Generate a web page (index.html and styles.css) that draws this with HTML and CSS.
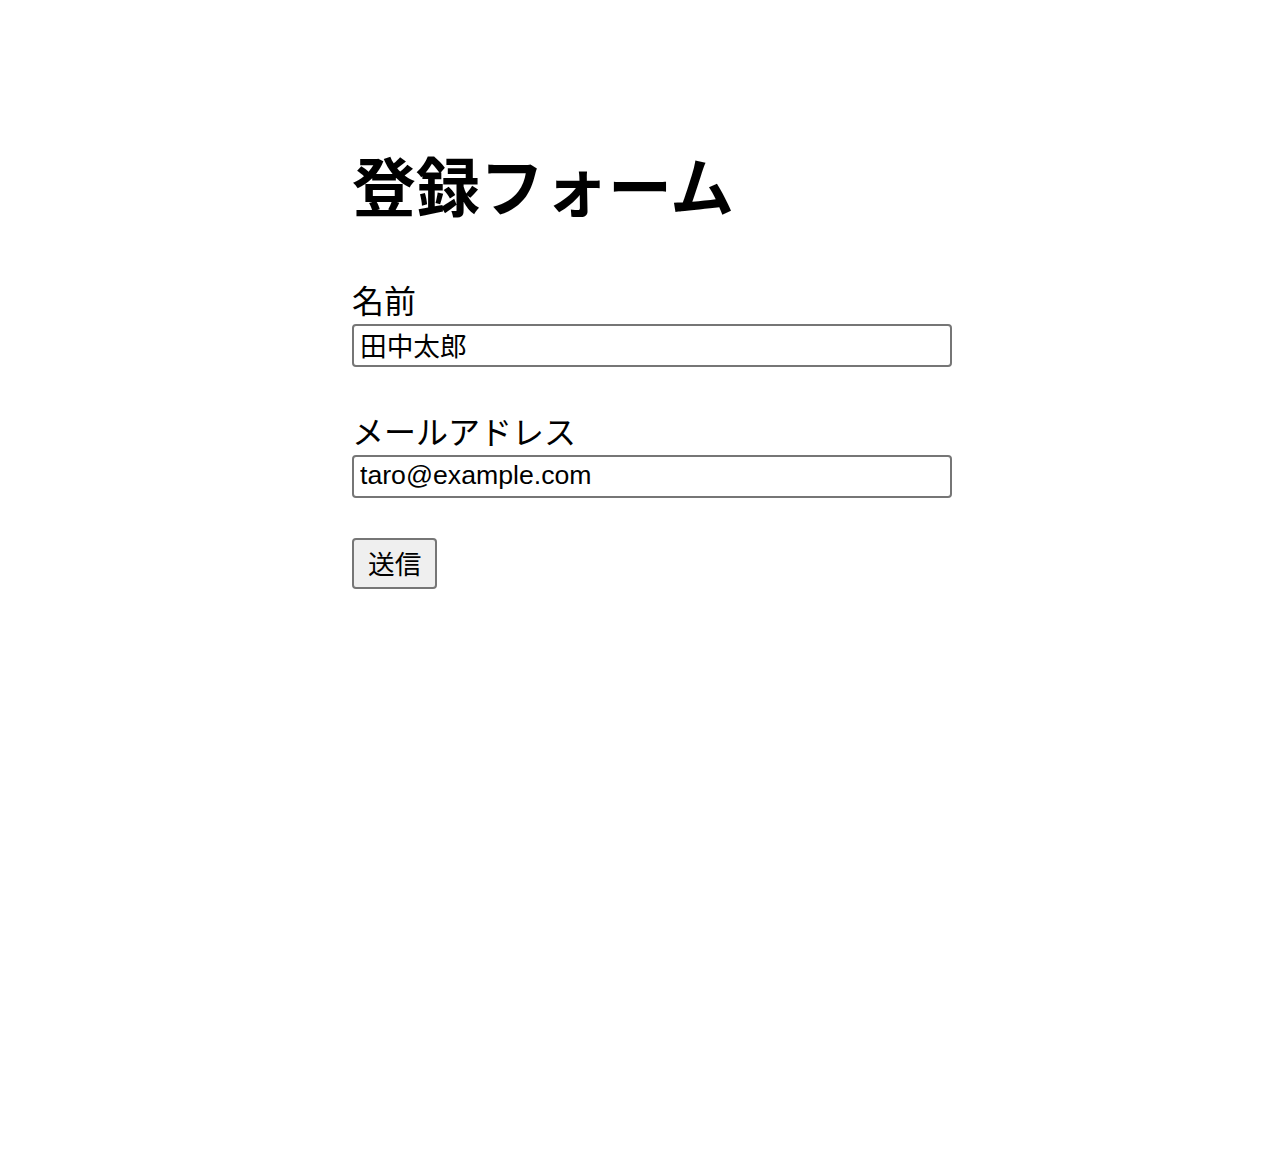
FILE: index.html
```html
<!DOCTYPE html>
<html lang="ja">
<head>
    <meta charset="UTF-8">
    <meta name="viewport" content="width=device-width, initial-scale=1.0">
    <title>登録フォーム</title>
    <link rel="stylesheet" href="styles.css">
</head>
<body>

<div class="container">
    <h1>登録フォーム</h1>
    <form onsubmit="return false;">
        <div class="form-group">
            <label for="name">名前</label>
            <input type="text" id="name" value="田中太郎">
        </div>
        <div class="form-group">
            <label for="email">メールアドレス</label>
            <input type="email" id="email" value="taro@example.com">
        </div>
        <button type="submit">送信</button>
    </form>
</div>

</body>
</html>
```

FILE: styles.css
```css
body {
    font-family: "Liberation Sans", "Noto Sans CJK JP", sans-serif;
    margin: 0;
    padding: 0;
    background-color: #ffffff;
    color: #000000;
}
.container {
    width: 600px;
    margin: 0 auto;
    padding: 100px 0 0 28px;
}
h1 {
    font-size: 64px;
    font-weight: bold;
    margin: 37px 0 47px 0;
}
.form-group {
    margin-bottom: 40px;
}
label {
    display: block;
    font-size: 32px;
    padding-bottom: 2px;
}
input {
    display: block;
    box-sizing: border-box;
    width: 600px;
    height: 43px;
    font-family: "Liberation Sans", "Noto Sans CJK JP", sans-serif;
    font-size: 26.67px;
    padding: 0 6px 3px 6px;
    border: 2px solid #767676;
    border-radius: 4px;
    color: #000000;
}
button {
    box-sizing: border-box;
    height: 51px;
    font-family: "Liberation Sans", "Noto Sans CJK JP", sans-serif;
    font-size: 26.67px;
    padding: 0 14px 2px 14px;
    background-color: #efefef;
    border: 2px solid #767676;
    border-radius: 4px;
    color: #000000;
    cursor: pointer;
}
```
